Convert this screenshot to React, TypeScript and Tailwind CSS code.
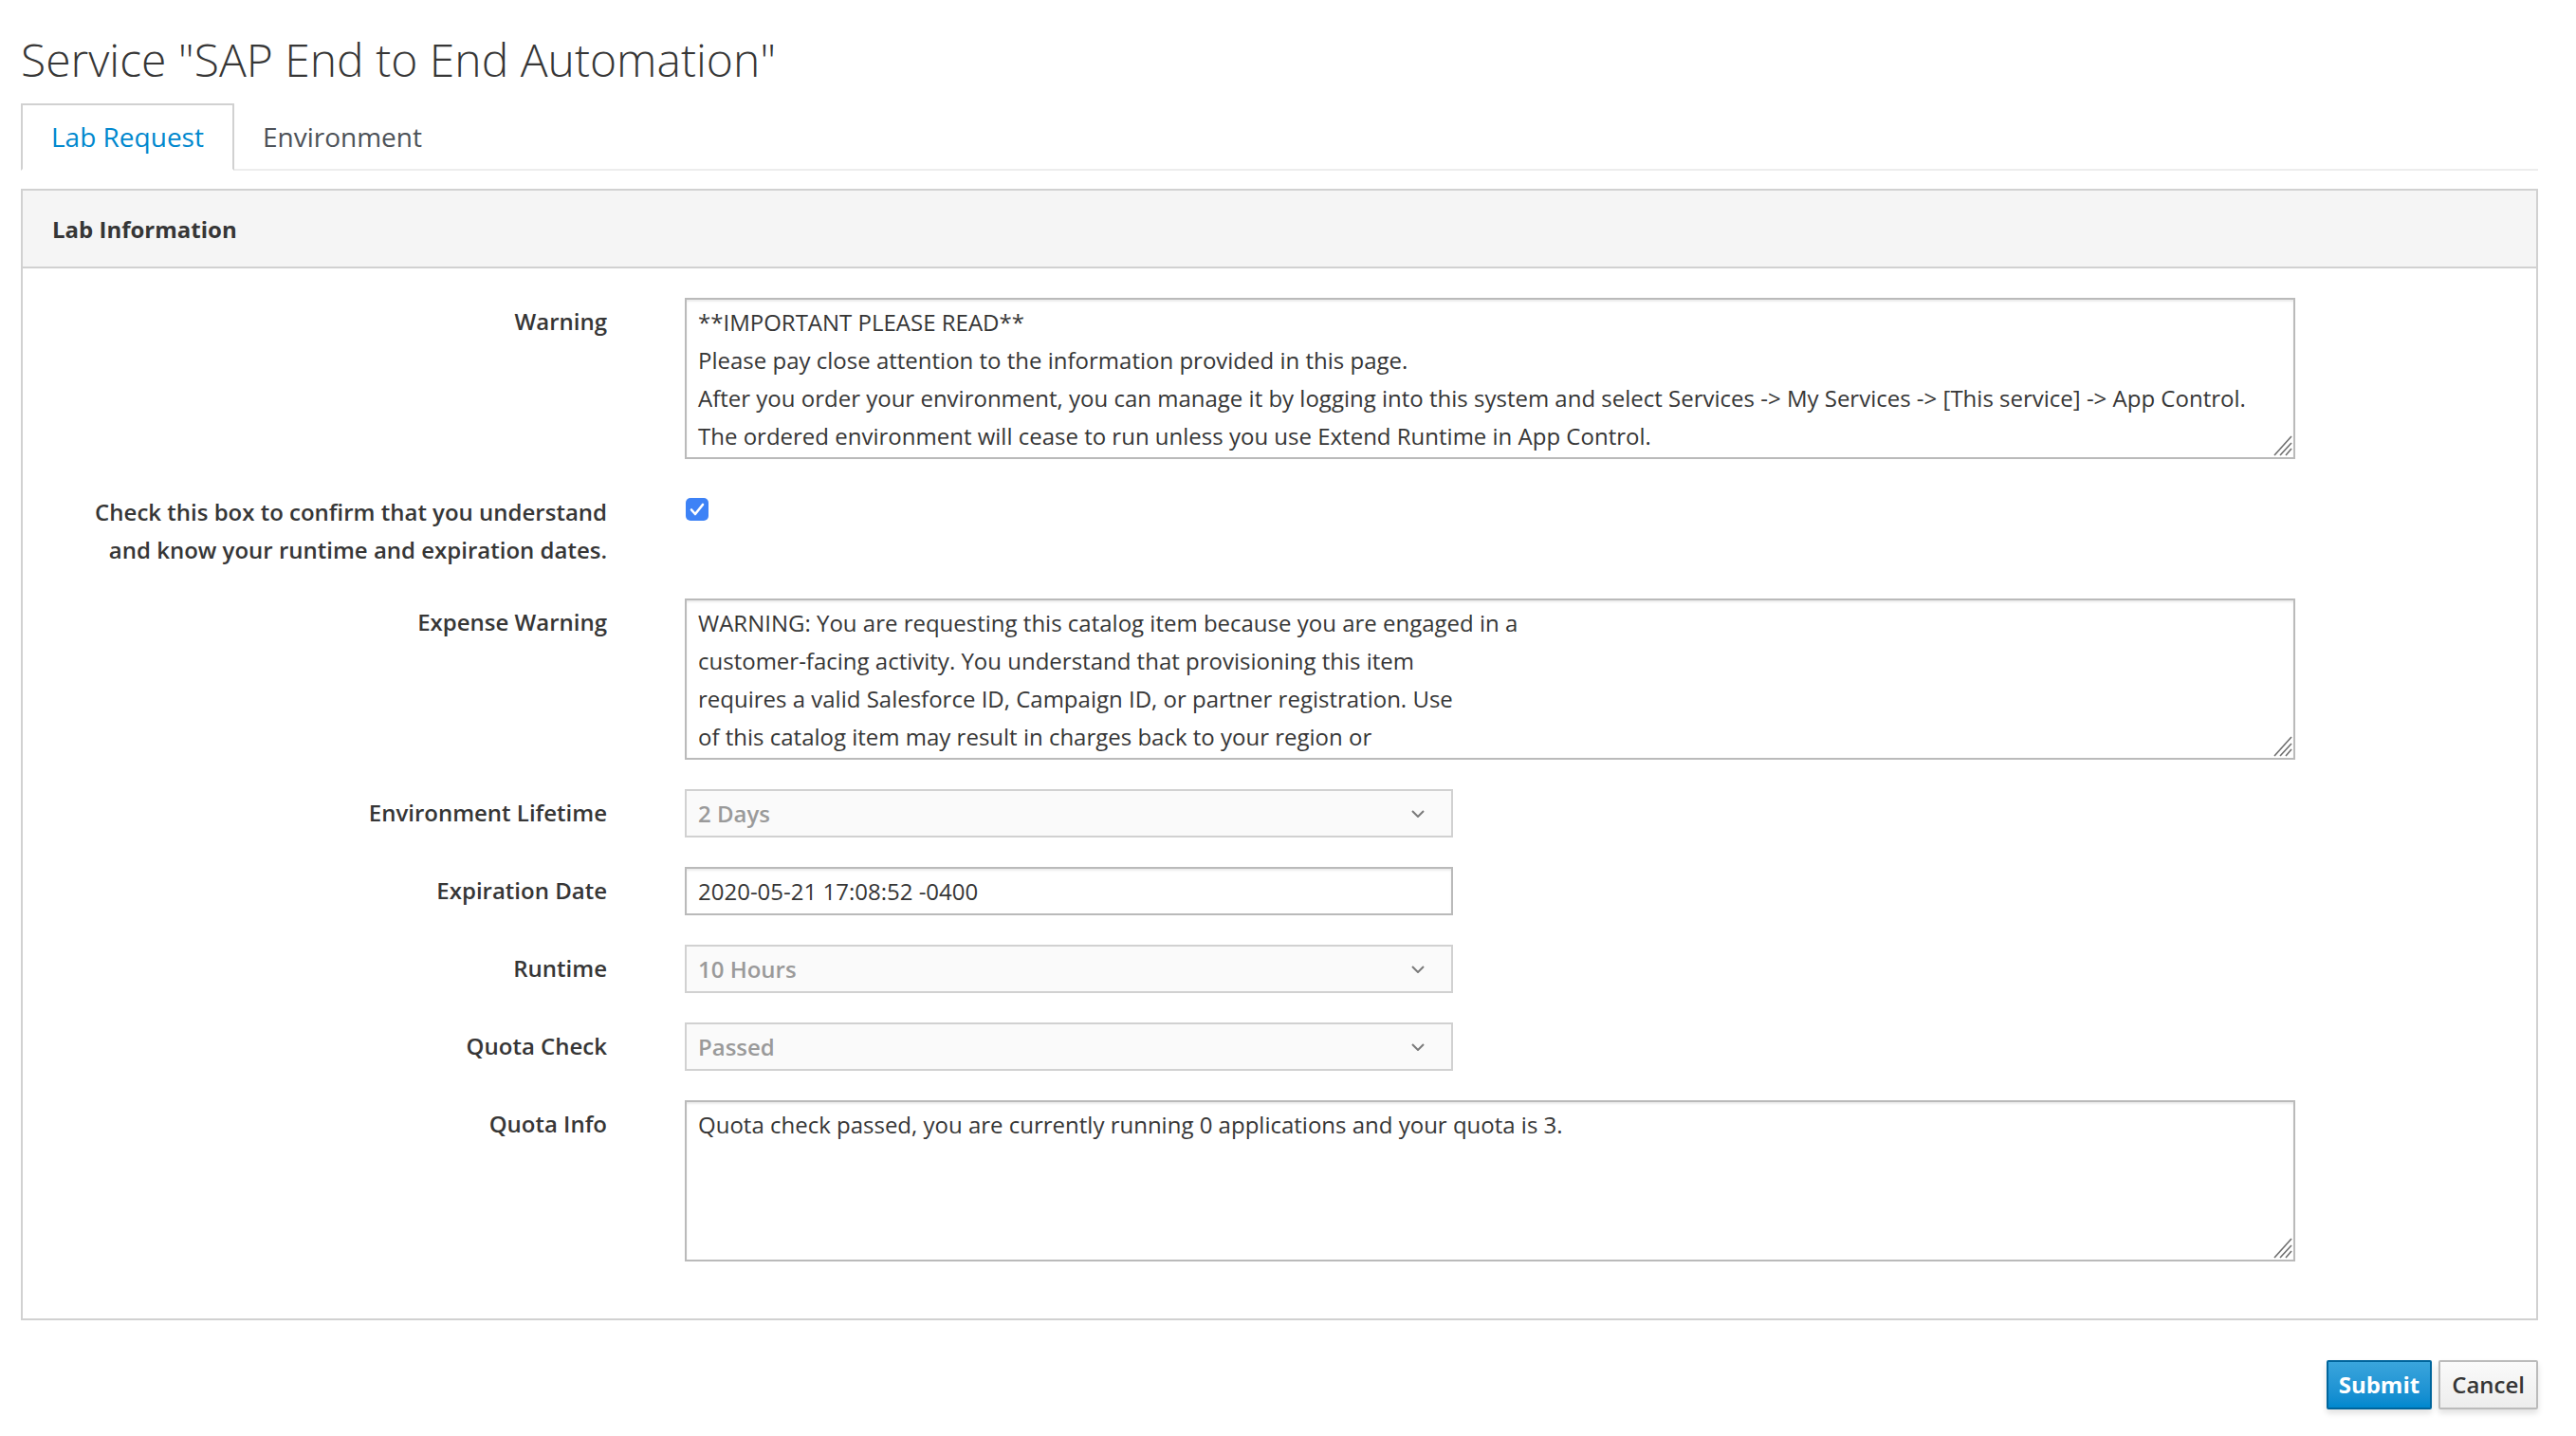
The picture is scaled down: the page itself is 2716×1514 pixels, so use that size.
import React from 'react'

const warningText = `**IMPORTANT PLEASE READ**
Please pay close attention to the information provided in this page.
After you order your environment, you can manage it by logging into this system and select Services -> My Services -> [This service] -> App Control.
The ordered environment will cease to run unless you use Extend Runtime in App Control.`

const expenseText = `WARNING: You are requesting this catalog item because you are engaged in a
customer-facing activity. You understand that provisioning this item
requires a valid Salesforce ID, Campaign ID, or partner registration. Use
of this catalog item may result in charges back to your region or`

const quotaText = 'Quota check passed, you are currently running 0 applications and your quota is 3.'

function Grip() {
  return (
    <svg
      className="pointer-events-none absolute bottom-[3px] right-[3px]"
      width="24"
      height="24"
      viewBox="0 0 24 24"
      fill="none"
      stroke="#6f6f6f"
      strokeWidth="1.6"
    >
      <line x1="5" y1="23" x2="23" y2="3" />
      <line x1="11" y1="23" x2="23" y2="10" />
      <line x1="17" y1="23" x2="23" y2="16" />
    </svg>
  )
}

function TextBox({ value }: { value: string }) {
  return (
    <div className="relative h-[170px] w-[1698px]">
      <textarea
        readOnly
        value={value}
        className="block h-full w-full resize-none overflow-hidden border-2 border-[#bababa] bg-white px-[12px] pt-[4px] text-[24px] leading-[40px] text-[#363636] shadow-[inset_0_2px_2px_rgba(3,3,3,0.08)] outline-none"
      />
      <Grip />
    </div>
  )
}

function Select({ value }: { value: string }) {
  return (
    <div className="flex h-[51px] w-[810px] items-center justify-between border-2 border-[#d1d1d1] bg-[#fafafa] pl-[12px] pr-[28px]">
      <span className="text-[24px] font-semibold text-[#9a9a9a]">{value}</span>
      <svg width="14" height="8" viewBox="0 0 14 8" fill="none" stroke="#7a7a7a" strokeWidth="2">
        <path d="M1 1l6 6 6-6" />
      </svg>
    </div>
  )
}

function Row({ label, children }: { label: React.ReactNode; children: React.ReactNode }) {
  return (
    <div className="flex gap-[82px]">
      <label className="w-[616px] shrink-0 pt-[5px] text-right text-[24px] font-semibold leading-[40px] text-[#363636]">
        {label}
      </label>
      <div>{children}</div>
    </div>
  )
}

export default function App() {
  return (
    <div className="min-h-screen bg-white pl-[22px] pr-[40px] font-['Open_Sans',sans-serif] text-[#363636]">
      <h1 className="pt-[35px] text-[48px] font-light leading-[56px] text-[#363636]">
        Service "SAP End to End Automation"
      </h1>

      <ul className="mt-[18px] flex border-b-2 border-[#ededed]">
        <li className="-mb-[2px]">
          <a className="block border-2 border-[#d1d1d1] border-b-transparent bg-white px-[30px] pb-[14px] pt-[13px] text-[28px] leading-[40px] text-[#0088ce]">
            Lab Request
          </a>
        </li>
        <li className="-mb-[2px]">
          <a className="block border-2 border-transparent px-[28px] pb-[14px] pt-[13px] text-[28px] leading-[40px] text-[#4d5258]">
            Environment
          </a>
        </li>
      </ul>

      <div className="mt-[19px] border-2 border-[#d1d1d1]">
        <div className="border-b-2 border-[#d1d1d1] bg-[#f5f5f5] px-[31px] pb-[20px] pt-[21px] text-[24px] font-bold leading-[39px] text-[#363636]">
          Lab Information
        </div>
        <div className="flex flex-col gap-[31px] pb-[60px] pt-[31px]">
          <Row label="Warning">
            <TextBox value={warningText} />
          </Row>
          <Row
            label={
              <>
                Check this box to confirm that you understand
                <br />
                and know your runtime and expiration dates.
              </>
            }
          >
            <div className="ml-[1px] mt-[10px] flex h-[24px] w-[24px] items-center justify-center rounded-[5px] bg-[#3d82f6]">
              <svg width="16" height="14" viewBox="0 0 16 14" fill="none" stroke="white" strokeWidth="2.6" strokeLinecap="round" strokeLinejoin="round">
                <path d="M2 7.5l4 4.5 8-10" />
              </svg>
            </div>
          </Row>
          <Row label="Expense Warning">
            <TextBox value={expenseText} />
          </Row>
          <Row label="Environment Lifetime">
            <Select value="2 Days" />
          </Row>
          <Row label="Expiration Date">
            <div className="flex h-[51px] w-[810px] items-center border-2 border-[#bababa] bg-white px-[12px] text-[24px] text-[#363636] shadow-[inset_0_2px_2px_rgba(3,3,3,0.08)]">
              2020-05-21 17:08:52 -0400
            </div>
          </Row>
          <Row label="Runtime">
            <Select value="10 Hours" />
          </Row>
          <Row label="Quota Check">
            <Select value="Passed" />
          </Row>
          <Row label="Quota Info">
            <TextBox value={quotaText} />
          </Row>
        </div>
      </div>

      <div className="mt-[42px] flex justify-end gap-[7px]">
        <button className="h-[52px] rounded-[2px] border-2 border-[#00659c] bg-gradient-to-b from-[#39a5dc] to-[#0088ce] px-[11px] text-[24px] font-bold text-white shadow-[0_4px_6px_rgba(3,3,3,0.12)]">
          Submit
        </button>
        <button className="h-[52px] rounded-[2px] border-2 border-[#bbbbbb] bg-gradient-to-b from-[#fafafa] to-[#ededed] px-[12px] text-[24px] font-semibold text-[#363636] shadow-[0_4px_6px_rgba(3,3,3,0.12)]">
          Cancel
        </button>
      </div>
    </div>
  )
}
